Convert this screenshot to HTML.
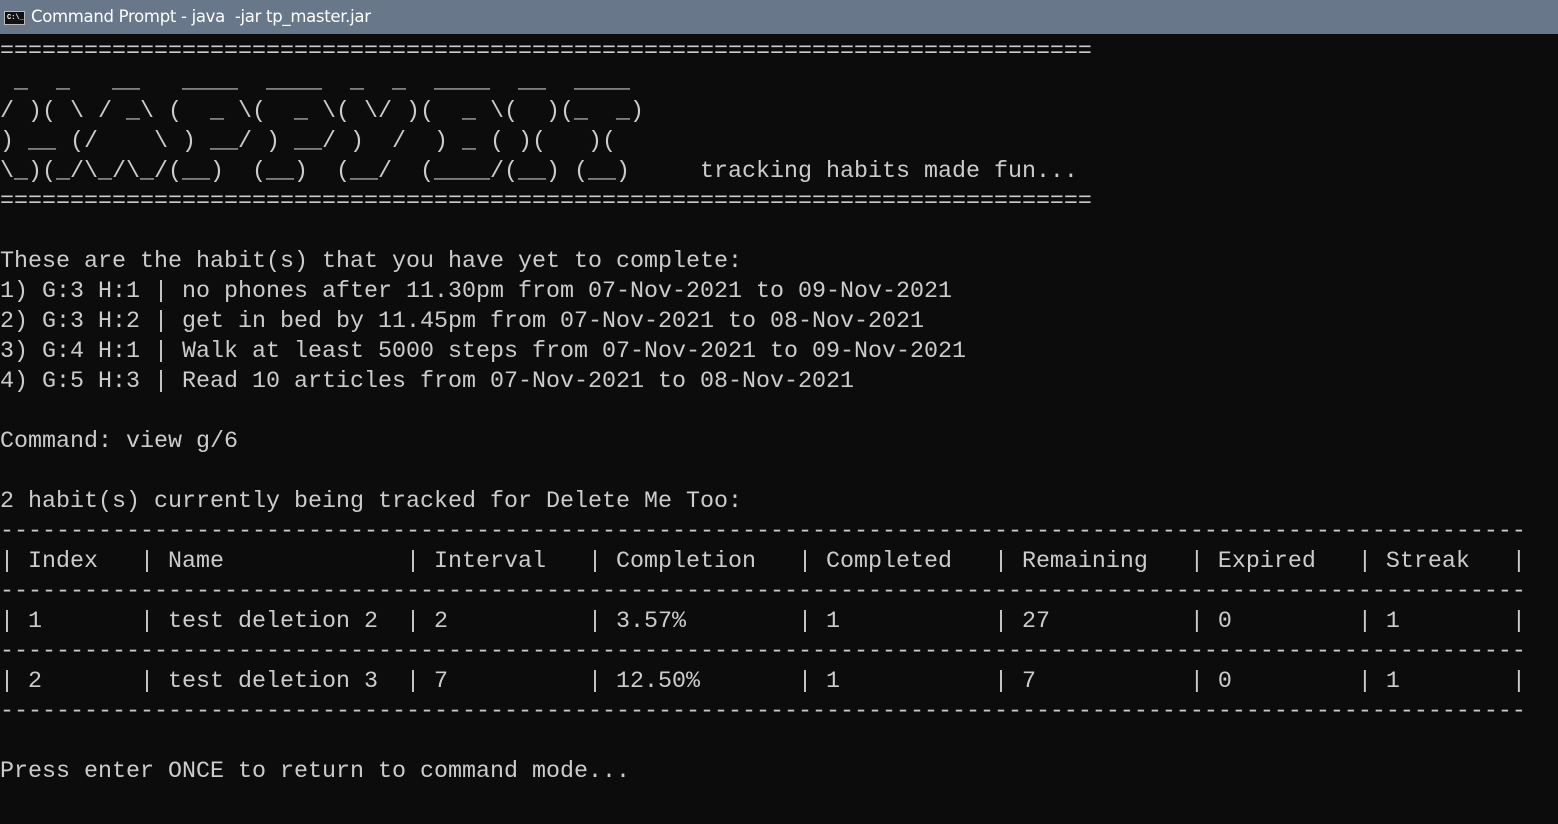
<!DOCTYPE html>
<html><head><meta charset="utf-8"><style>
html,body{margin:0;padding:0;width:1558px;height:824px;overflow:hidden;background:#0c0c0c;}
.bar{position:absolute;left:0;top:0;width:1558px;height:34px;background:#687789;}
.bar .t{position:absolute;left:31px;top:7px;font-family:"DejaVu Sans","Liberation Sans",sans-serif;font-size:16.5px;color:#fff;letter-spacing:-0.3px;}
.icon{position:absolute;left:4px;top:11px;width:21px;height:14px;background:#111;border:1px solid #bbb;box-sizing:border-box;}
.icon span{position:absolute;left:2px;top:2px;font:bold 7px "Liberation Mono",monospace;color:#fff;line-height:9px;}
pre{position:absolute;left:0;top:37px;margin:0;font-family:"Liberation Mono",monospace;font-size:23.33px;line-height:30px;color:#cccccc;white-space:pre;}
</style></head><body>
<div class="bar"><div class="icon"><span>C:\_</span></div><div class="t">Command Prompt - java&nbsp; -jar tp_master.jar</div></div>
<pre>==============================================================================
 _  _   __   ____  ____  _  _  ____  __  ____
/ )( \ / _\ (  _ \(  _ \( \/ )(  _ \(  )(_  _)
) __ (/    \ ) __/ ) __/ )  /  ) _ ( )(   )(
\_)(_/\_/\_/(__)  (__)  (__/  (____/(__) (__)     tracking habits made fun...
==============================================================================

These are the habit(s) that you have yet to complete:
1) G:3 H:1 | no phones after 11.30pm from 07-Nov-2021 to 09-Nov-2021
2) G:3 H:2 | get in bed by 11.45pm from 07-Nov-2021 to 08-Nov-2021
3) G:4 H:1 | Walk at least 5000 steps from 07-Nov-2021 to 09-Nov-2021
4) G:5 H:3 | Read 10 articles from 07-Nov-2021 to 08-Nov-2021

Command: view g/6

2 habit(s) currently being tracked for Delete Me Too:
-------------------------------------------------------------------------------------------------------------
| Index   | Name             | Interval   | Completion   | Completed   | Remaining   | Expired   | Streak   |
-------------------------------------------------------------------------------------------------------------
| 1       | test deletion 2  | 2          | 3.57%        | 1           | 27          | 0         | 1        |
-------------------------------------------------------------------------------------------------------------
| 2       | test deletion 3  | 7          | 12.50%       | 1           | 7           | 0         | 1        |
-------------------------------------------------------------------------------------------------------------

Press enter ONCE to return to command mode...</pre>
</body></html>
